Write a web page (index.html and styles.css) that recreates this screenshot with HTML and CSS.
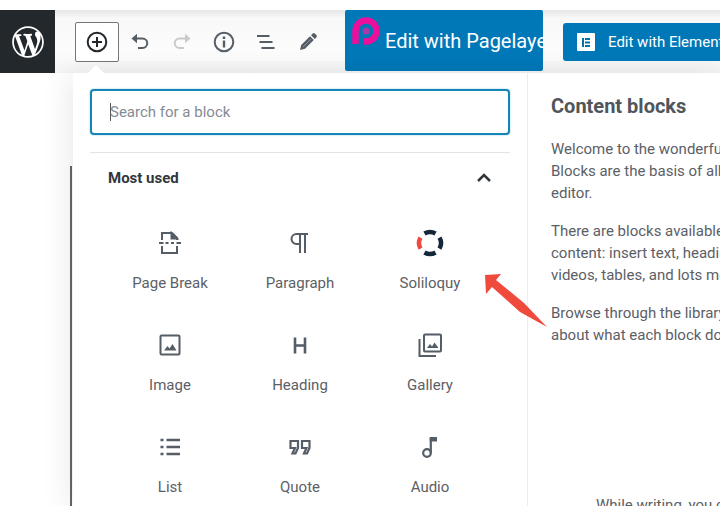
FILE: index.html
```html
<!DOCTYPE html>
<html lang="en">
<head>
<meta charset="utf-8">
<title>Block editor</title>
<link rel="stylesheet" href="styles.css">
</head>
<body>
<header class="toolbar">
  <a class="wp" href="#" aria-label="WordPress">
    <svg width="38" height="38" viewBox="-2 -2 24 24" fill="#fff"><path d="M20 10c0-5.51-4.49-10-10-10C4.48 0 0 4.49 0 10c0 5.52 4.48 10 10 10 5.51 0 10-4.48 10-10zM7.78 15.37L4.37 6.22c.55-.02 1.17-.08 1.17-.08.5-.06.44-1.13-.06-1.11 0 0-1.45.11-2.37.11-.18 0-.37 0-.58-.01C4.12 2.69 6.87 1.11 10 1.11c2.33 0 4.45.87 6.05 2.34-.68-.11-1.65.39-1.65 1.58 0 .74.45 1.36.9 2.1.35.61.55 1.36.55 2.46 0 1.49-1.4 5-1.4 5l-3.03-8.37c.54-.02.82-.17.82-.17.5-.05.44-1.25-.06-1.22 0 0-1.44.12-2.38.12-.87 0-2.33-.12-2.33-.12-.5-.03-.56 1.2-.06 1.22l.92.08 1.26 3.41zM17.41 10c.24-.64.74-1.87.43-4.25.7 1.29 1.05 2.71 1.05 4.25 0 3.29-1.73 6.24-4.4 7.78.97-2.59 1.94-5.2 2.92-7.78zM6.1 18.09C3.12 16.65 1.11 13.53 1.11 10c0-1.3.23-2.48.72-3.59C3.25 10.3 4.67 14.2 6.1 18.09zm4.03-6.63l2.58 6.98c-.86.29-1.76.45-2.71.45-.79 0-1.57-.11-2.29-.33.81-2.38 1.62-4.74 2.42-7.1z"/></svg>
  </a>
  <button class="add" type="button" aria-label="Add block">
    <svg width="24" height="24" viewBox="0 0 24 24" fill="none" stroke="#23282d" stroke-width="2"><circle cx="12" cy="12" r="9.3"/><path d="M12 7v10M7 12h10"/></svg>
  </button>
  <button class="tool" type="button" aria-label="Undo">
    <svg width="20" height="20" viewBox="0 0 20 20" fill="none" stroke="#555d66" stroke-width="2"><path d="M4 6.500h8.500a4 4 0 0 1 0 9.500H8"/><path d="M7 1.800v9.400L1.500 6.500z" fill="#555d66" stroke="none"/></svg>
  </button>
  <button class="tool faded" type="button" aria-label="Redo">
    <svg width="20" height="20" viewBox="0 0 20 20" fill="none" stroke="#555d66" stroke-width="2"><path d="M16 6.500H7.500a4 4 0 0 0 0 9.500H12"/><path d="M13 1.800v9.400l5.500-4.700z" fill="#555d66" stroke="none"/></svg>
  </button>
  <button class="tool" type="button" aria-label="Content structure">
    <svg width="24" height="24" viewBox="0 0 24 24" fill="none" stroke="#555d66" stroke-width="2"><circle cx="12" cy="12" r="9.300"/><path d="M12 6.500v2.500M12 10.500v7" stroke-width="2.400"/></svg>
  </button>
  <button class="tool" type="button" aria-label="Block navigation">
    <svg width="20" height="20" viewBox="0 0 20 20" fill="none" stroke="#555d66" stroke-width="2"><path d="M1 4h12.500M3.500 10h13M5.500 16h13"/></svg>
  </button>
  <button class="tool" type="button" aria-label="Tools">
    <svg width="20" height="20" viewBox="0 0 20 20" fill="#555d66"><path d="M2 18l1.200-5L12 4.200 15.800 8 7 16.800zM13 3.200l1.800-1.700q1-.9 2 0l1.700 1.700q.9 1 0 2L16.800 7z"/><path d="M5 15l8-8" stroke="#8b9197" stroke-width="1"/></svg>
  </button>
  <a class="pagelayer" href="#">
    <svg width="30" height="30" viewBox="0 0 30 30"><path d="M4.500 28V15A10.500 10.500 0 1 1 15 25.500H13" fill="none" stroke="#ec0f9c" stroke-width="6.500"/><circle cx="15" cy="15" r="3.500" fill="#a83aa8"/></svg>
    <span>Edit with Pagelayer</span>
  </a>
  <a class="elementor" href="#">
    <svg width="18" height="18" viewBox="0 0 18 18"><rect width="18" height="18" rx="1" fill="#fff"/><path d="M5 5h2v9H5zM8 5h5v2H8zM8 8.500h5v2H8zM8 12h5v2H8z" fill="#0073aa"/></svg>
    <span>Edit with Elementor</span>
  </a>
</header>
<main class="canvas"><div class="page-edge"></div></main>

<section class="inserter" aria-label="Block inserter">
  <div class="picker">
    <input class="search" type="search" aria-label="Search for a block" placeholder="Search for a block" autofocus>
    <button class="section" type="button" aria-expanded="true">
      <span>Most used</span>
      <svg width="16" height="16" viewBox="0 0 16 16" fill="none" stroke="#32373c" stroke-width="2.500"><path d="M2 11l6-6 6 6"/></svg>
    </button>
    <div class="blocks">
      <button class="block" type="button">
        <svg width="24" height="24" viewBox="0 0 24 24" fill="none" stroke="#555d66" stroke-width="2"><path d="M4 9V2h10l5 5v2M4 15v7h15v-7"/><path d="M13.500 2v5.500H19z" fill="#555d66"/><path d="M1 12h4.500M7.500 12h3M13 12h3M18.500 12H23"/></svg>
        <span>Page Break</span>
      </button>
      <button class="block" type="button">
        <svg width="24" height="24" viewBox="0 0 24 24" fill="none" stroke="#555d66" stroke-width="2"><path d="M20 3H8.500a5 5 0 0 0 0 10H12M12 3v19M17 3v19"/></svg>
        <span>Paragraph</span>
      </button>
      <button class="block" type="button">
        <svg width="28" height="28" viewBox="0 0 28 28" fill="none" stroke="#14283a" stroke-width="4.500"><path d="M8.500 4.500a11 11 0 0 1 11 0M23.500 8.500a11 11 0 0 1 0 11M19.500 23.500a11 11 0 0 1-11 0"/><path d="M4.500 19.500a11 11 0 0 1 0-11" stroke="#f1493d"/></svg>
        <span>Soliloquy</span>
      </button>
      <button class="block" type="button">
        <svg width="24" height="24" viewBox="0 0 24 24" fill="none" stroke="#555d66" stroke-width="2"><rect x="2.500" y="2.500" width="19" height="19" rx="1"/><path d="M6 17.500l3.500-4.500 2 2.500 3-4.500 4 6.500z" fill="#555d66" stroke="none"/></svg>
        <span>Image</span>
      </button>
      <button class="block" type="button">
        <svg width="24" height="24" viewBox="0 0 24 24" fill="none" stroke="#555d66" stroke-width="2.600"><path d="M7 4.500v16M17 4.500v16M7 12.500h10"/></svg>
        <span>Heading</span>
      </button>
      <button class="block" type="button">
        <svg width="24" height="24" viewBox="0 0 24 24" fill="none" stroke="#555d66" stroke-width="2"><rect x="6" y="1.500" width="17" height="17" rx="1"/><path d="M1.500 6v17H18"/><path d="M9 15l3-4 2 2.500 2.500-4 4 5.500z" fill="#555d66" stroke="none"/></svg>
        <span>Gallery</span>
      </button>
      <button class="block" type="button">
        <svg width="24" height="24" viewBox="0 0 24 24" fill="none" stroke="#555d66" stroke-width="2.500"><path d="M8.500 5H22M8.500 12H22M8.500 19H22M2.500 5h3M2.500 12h3M2.500 19h3"/></svg>
        <span>List</span>
      </button>
      <button class="block" type="button">
        <svg width="24" height="24" viewBox="0 0 24 24" fill="none" stroke="#555d66" stroke-width="2.200"><path d="M2.500 6h7.500v7l-2.500 5.500H4.500L7 13H2.500zM14 6h7.500v7L19 18.500h-3l2.500-5.500H14z"/></svg>
        <span>Quote</span>
      </button>
      <button class="block" type="button">
        <svg width="24" height="24" viewBox="0 0 24 24" fill="none" stroke="#555d66" stroke-width="2.200"><circle cx="9" cy="18" r="3.800"/><path d="M12.800 18V3"/><path d="M11.700 2H19v4.500h-7.300z" fill="#555d66" stroke="none"/></svg>
        <span>Audio</span>
      </button>
    </div>
  </div>
  <aside class="help">
    <h2>Content blocks</h2>
    <p>Welcome to the wonderful<br>Blocks are the basis of all<br>editor.</p>
    <p>There are blocks available<br>content: insert text, headings<br>videos, tables, and lots more</p>
    <p>Browse through the library<br>about what each block does</p>
    <p class="tip">While writing, you can</p>
  </aside>
  <svg class="pointer" width="64" height="56" viewBox="0 0 64 56"><path d="M1 2l16-1-5 6L40 30 63 54 36 39 8 14l-6 7z" fill="#f04a3c"/></svg>
</section>
</body>
</html>
```
FILE: styles.css
```css
* { box-sizing: border-box; }

body {
  position: relative;
  display: flex;
  flex-direction: column;
  height: 100vh;
  margin: 0;
  padding-top: 10px;
  overflow: hidden;
  background: #fff;
  font-family: Roboto, "Liberation Sans", sans-serif;
  font-size: 15px;
  color: #5c6066;
}

button { padding: 0; border: 0; background: none; font: inherit; color: inherit; }
a { text-decoration: none; color: #fff; }
svg { display: block; flex: none; }

.toolbar {
  display: flex;
  flex: none;
  align-items: center;
  height: 63px;
  background: linear-gradient(#e6e6e6, #f8f8f8 8px, #fcfcfc 40px, #f5f5f5);
  white-space: nowrap;
}

.wp {
  display: flex;
  align-items: center;
  justify-content: center;
  align-self: stretch;
  flex: none;
  width: 55px;
  margin-right: 20px;
  background: #23282d;
}

.add, .tool {
  display: flex;
  align-items: center;
  justify-content: center;
  flex: none;
  width: 42px;
  height: 40px;
}

.add { width: 44px; border: 1px solid #777; border-radius: 2px; background: #fff; }
.faded { opacity: 0.3; }

.pagelayer {
  display: flex;
  flex: none;
  align-self: flex-start;
  width: 198px;
  height: 61px;
  margin: 0 20px 0 16px;
  padding: 6px 0 0 6px;
  gap: 4px;
  overflow: hidden;
  border-radius: 2px;
  background: #0078b8;
  font-size: 20px;
  line-height: 50px;
}

.elementor {
  display: flex;
  flex: none;
  align-items: center;
  gap: 13px;
  height: 38px;
  padding: 0 14px;
  border-radius: 3px;
  background: #0078b8;
}

.canvas { display: flex; flex: 1; padding: 93px 0 0 70px; }
.page-edge { flex: 1; border-left: 2px solid #666; }

.inserter {
  position: absolute;
  top: 73px;
  right: 0;
  bottom: 0;
  left: 73px;
  display: grid;
  grid-template-columns: 455px 1fr;
  background: #fff;
  box-shadow: 0 3px 30px rgba(25, 30, 35, 0.12);
  clip-path: inset(-12px 0 0 -40px);
}

.inserter::before {
  content: "";
  position: absolute;
  top: -8px;
  left: 15px;
  border: 8px solid transparent;
  border-top: 0;
  border-bottom-color: #fff;
}

.picker { padding: 16px 17px 0; border-right: 1px solid #eaecee; }

.search {
  display: block;
  width: 100%;
  height: 46px;
  padding: 0 18px;
  border: 2px solid #1685b5;
  border-radius: 4px;
  outline: 0;
  background: linear-gradient(#555, #555) 18px center / 1px 18px no-repeat #fff;
  box-shadow: 0 0 2px #7ccdf0;
  caret-color: transparent;
  font: inherit;
}

.search::placeholder { color: #858b92; opacity: 1; }

.section {
  display: flex;
  align-items: center;
  justify-content: space-between;
  width: 100%;
  height: 50px;
  margin-top: 17px;
  padding: 0 18px;
  border-top: 1px solid #e2e4e7;
  font-weight: 700;
  color: #32373c;
}

.blocks { display: grid; grid-template-columns: repeat(3, 1fr); padding: 24px 15px 0; row-gap: 8px; }

.block { display: flex; flex-direction: column; align-items: center; height: 94px; }
.block svg { margin: 5px 0 18px; }
.block svg[width="28"] { margin: 3px 0 16px; }
.block span { line-height: 20px; }

.help { padding: 22px 0 0 23px; overflow: hidden; white-space: nowrap; line-height: 22px; }
.help h2 { margin: 0 0 21px; font-size: 20px; line-height: 22px; color: #50565c; }
.help p { margin: 0 0 16px; }
.help .tip { margin: 148px 0 0 45px; }

.pointer { position: absolute; top: 200px; left: 411px; }
```
